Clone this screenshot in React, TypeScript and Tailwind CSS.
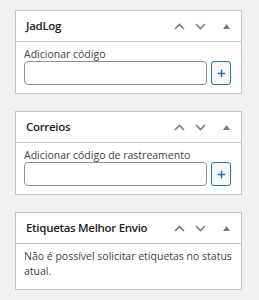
import { Plus } from 'lucide-react'

function Controls() {
  return (
    <div className="flex items-center text-[#787c82]">
      <span className="flex h-[20px] w-[20px] items-center justify-center">
        <svg width="11" height="7" viewBox="0 0 11 7" fill="none" stroke="currentColor" strokeWidth="1.6">
          <path d="M1 6l4.5-4.5L10 6" />
        </svg>
      </span>
      <span className="ml-[1px] flex h-[20px] w-[20px] items-center justify-center">
        <svg width="11" height="7" viewBox="0 0 11 7" fill="none" stroke="currentColor" strokeWidth="1.6">
          <path d="M1 1l4.5 4.5L10 1" />
        </svg>
      </span>
      <span className="ml-[6px] flex h-[20px] w-[20px] items-center justify-center">
        <svg width="7" height="5" viewBox="0 0 7 5" fill="currentColor">
          <path d="M3.5 0L7 5H0z" />
        </svg>
      </span>
    </div>
  )
}

function Postbox({ title, children }: { title: string; children: React.ReactNode }) {
  return (
    <div className="w-[227px] border border-[#c3c4c7] bg-white">
      <div className="flex h-[31px] items-center justify-between border-b border-[#c3c4c7] pl-[10px] pr-[5px]">
        <h2 className="text-[11.5px] font-semibold tracking-[-0.3px] text-[#1d2327]">{title}</h2>
        <Controls />
      </div>
      {children}
    </div>
  )
}

function CodeField({ label }: { label: string }) {
  return (
    <div className="px-[8px] pb-[8px] pt-[5px]">
      <label className="block text-[10.5px] leading-[14px] text-[#3c434a]">{label}</label>
      <div className="flex items-center gap-[4px]">
        <input
          type="text"
          className="h-[24px] w-[183px] rounded-[4px] border border-[#8c8f94] bg-white px-[6px] text-[11px] outline-none"
        />
        <button
          type="button"
          className="flex h-[24px] w-[20px] items-center justify-center rounded-[3px] border border-[#2271b1] bg-[#f6f7f7] text-[#2271b1]"
        >
          <Plus className="h-[11px] w-[11px]" strokeWidth={3} />
        </button>
      </div>
    </div>
  )
}

export default function App() {
  return (
    <div
      className="min-h-[300px] w-[259px] bg-[#f0f0f1] pl-[15px] pt-[10px]"
      style={{ fontFamily: '"Open Sans", "Noto Sans", sans-serif' }}
    >
      <div className="flex flex-col gap-[17px]">
        <Postbox title="JadLog">
          <CodeField label="Adicionar código" />
        </Postbox>
        <Postbox title="Correios">
          <CodeField label="Adicionar código de rastreamento" />
        </Postbox>
        <Postbox title="Etiquetas Melhor Envio">
          <p className="px-[8px] pb-[10px] pt-[5px] text-[10.5px] leading-[15px] text-[#3c434a]">
            Não é possível solicitar etiquetas no status atual.
          </p>
        </Postbox>
      </div>
    </div>
  )
}
